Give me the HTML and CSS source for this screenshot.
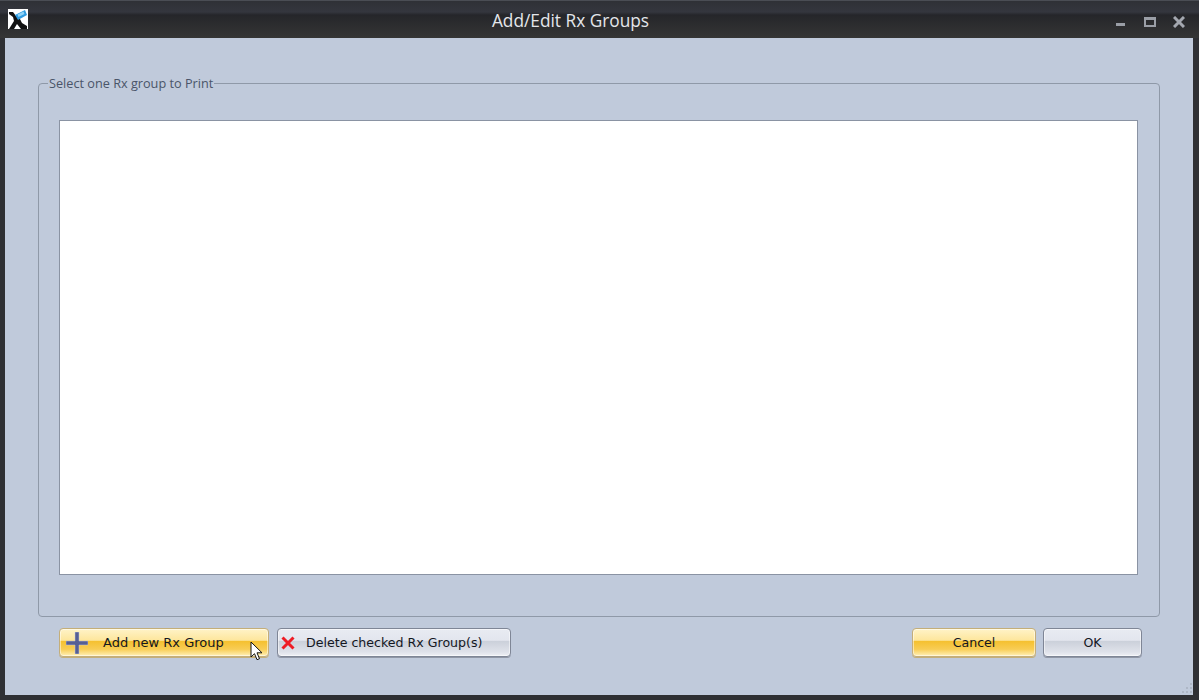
FILE: index.html
```html
<!DOCTYPE html>
<html lang="en">
<head>
  <meta charset="UTF-8">
  <title>Add/Edit Rx Groups</title>
  <link rel="stylesheet" href="styles.css">
</head>
<body>

<div class="window">
  <div class="titlebar">
    <svg class="app-icon" width="20" height="20" viewBox="0 0 20 20">
      <rect width="20" height="20" fill="#fff"/>
      <path d="M1 3h4l3 4 3 1 3 6 5 3v3h-6l-4-5-3 5H1l5-8-1-4-4-3z" fill="#111"/>
      <path d="M7 6l10-5 2 5-9 5z" fill="#2f9be0"/>
      <path d="M9.500 5.500l6-3 1 2.500-6 3z" fill="#8fd3f7"/>
    </svg>
    <div class="title">Add/Edit Rx Groups</div>
    <div class="controls">
      <svg width="12" height="12" viewBox="0 0 12 12"><rect x="1" y="7" width="9" height="3" fill="#9a9ea6"/></svg>
      <svg width="12" height="12" viewBox="0 0 12 12"><path d="M0 1h12v10H0z M2 4v5h8V4z" fill="#9a9ea6" fill-rule="evenodd"/></svg>
      <svg width="12" height="12" viewBox="0 0 12 12"><path d="M1 1l10 10M11 1L1 11" stroke="#a4a8b0" stroke-width="3" fill="none"/></svg>
    </div>
  </div>

  <div class="content">
    <fieldset class="group">
      <legend>Select one Rx group to Print</legend>
      <div class="listbox"></div>
    </fieldset>

    <div class="buttons">
      <div class="left-buttons">
        <button class="btn hot add">
          <svg class="plus" width="22" height="22" viewBox="0 0 22 22"><path d="M9 0h4v9h9v4h-9v9H9v-9H0V9h9z" fill="#565f94" stroke="#c5cbe0" stroke-width=".5"/></svg>
          <span>Add new Rx Group</span>
        </button>
        <button class="btn del">
          <svg class="cross" width="14" height="14" viewBox="0 0 14 14"><path d="M1.500 1.500l11 11M12.500 1.500l-11 11" stroke="#ee1c25" stroke-width="3" fill="none"/></svg>
          <span>Delete checked Rx Group(s)</span>
        </button>
      </div>
      <div class="right-buttons">
        <button class="btn hot cancel">Cancel</button>
        <button class="btn ok">OK</button>
      </div>
    </div>

    <svg class="cursor" width="13" height="20" viewBox="0 0 13 20"><path d="M1 1v15l3.500-3.300 2.500 6 2.500-1-2.500-5.900h5z" fill="#fff" stroke="#111" stroke-width="1"/></svg>
    <svg class="grip" width="12" height="12" viewBox="0 0 12 12"><path d="M9 1h2v2H9zM5 5h2v2H5zM9 5h2v2H9zM1 9h2v2H1zM5 9h2v2H5zM9 9h2v2H9z" fill="#aeb7c6"/></svg>
  </div>
</div>

</body>
</html>
```

FILE: styles.css
```css
html, body {
  margin: 0;
  padding: 0;
  height: 100%;
  background-color: #2e2f33;
}
.window {
  position: relative;
  height: 700px;
  display: flex;
  flex-direction: column;
  box-sizing: border-box;
  padding: 0 6px 5px 5px;
  background-color: #2f3034;
  font-family: "Open Sans", "Liberation Sans", sans-serif;
}
.titlebar {
  height: 38px;
  margin: 0 -6px 0 -5px;
  padding: 0 58px 0 0;
  flex: none;
  display: flex;
  align-items: center;
  position: relative;
  background: linear-gradient(#2f3136 0, #34363e 11px, #25262a 14px, #363636 38px);
  border-top: 1px solid #4a4d54;
  box-sizing: border-box;
}
.app-icon {
  position: absolute;
  left: 8px;
  top: 8px;
}
.title {
  flex: 1;
  text-align: center;
  color: #e4e6ea;
  font-size: 17.3px;
  padding-top: 2px;
}
.controls {
  position: absolute;
  right: 14px;
  top: 15px;
  display: flex;
  gap: 17px;
}
.content {
  position: relative;
  flex: 1;
  padding: 37px 33px 0 33px;
  background-color: #c0cadb;
}
.group {
  margin: 0;
  height: 542px;
  box-sizing: border-box;
  padding: 29px 21px 41px 20px;
  border: 1px solid #8f99a8;
  border-radius: 4px;
}
.group legend {
  padding: 0 1px;
  margin-left: -11px;
  font-size: 12.7px;
  line-height: 16px;
  color: #4a5569;
}
.listbox {
  height: 100%;
  box-sizing: border-box;
  background-color: #fff;
  border: 1px solid #8a93a3;
}
.buttons {
  display: flex;
  justify-content: space-between;
  margin-top: 11px;
  padding: 0 18px 0 21px;
}
.left-buttons, .right-buttons {
  display: flex;
  gap: 8px;
}
.right-buttons {
  gap: 7px;
}
.btn {
  height: 29px;
  box-sizing: border-box;
  padding: 0;
  display: flex;
  align-items: center;
  justify-content: center;
  font-family: "DejaVu Sans", sans-serif;
  font-size: 12.6px;
  color: #14171f;
  border: 1px solid #7f8696;
  border-radius: 4px;
  background: linear-gradient(#e8ebf2 0, #e3e6ee 42%, #cbd0da 45%, #dfe2ea 85%, #eef0f5 100%);
  box-shadow: inset 0 0 0 1px rgba(255,255,255,.5), 0 1px 0 #8f96a5;
}
.hot {
  border-color: #c4ae79;
  background: linear-gradient(#fff3c8 0, #fde69c 42%, #f5c02f 45%, #f8cd55 75%, #fff0b8 100%);
  box-shadow: inset 0 0 0 1px rgba(255,255,255,.5), 0 1px 0 #c4ae79;
}
.add {
  width: 210px;
  justify-content: flex-start;
  padding-left: 6px;
  font-size: 13px;
}
.add span {
  margin-left: 15px;
}
.del {
  width: 234px;
  justify-content: flex-start;
  padding-left: 3px;
}
.del span {
  margin-left: 11px;
}
.cancel {
  width: 124px;
}
.ok {
  width: 99px;
}
.cursor {
  position: absolute;
  left: 245px;
  top: 603px;
}
.grip {
  position: absolute;
  right: 0;
  bottom: 1px;
}
```
